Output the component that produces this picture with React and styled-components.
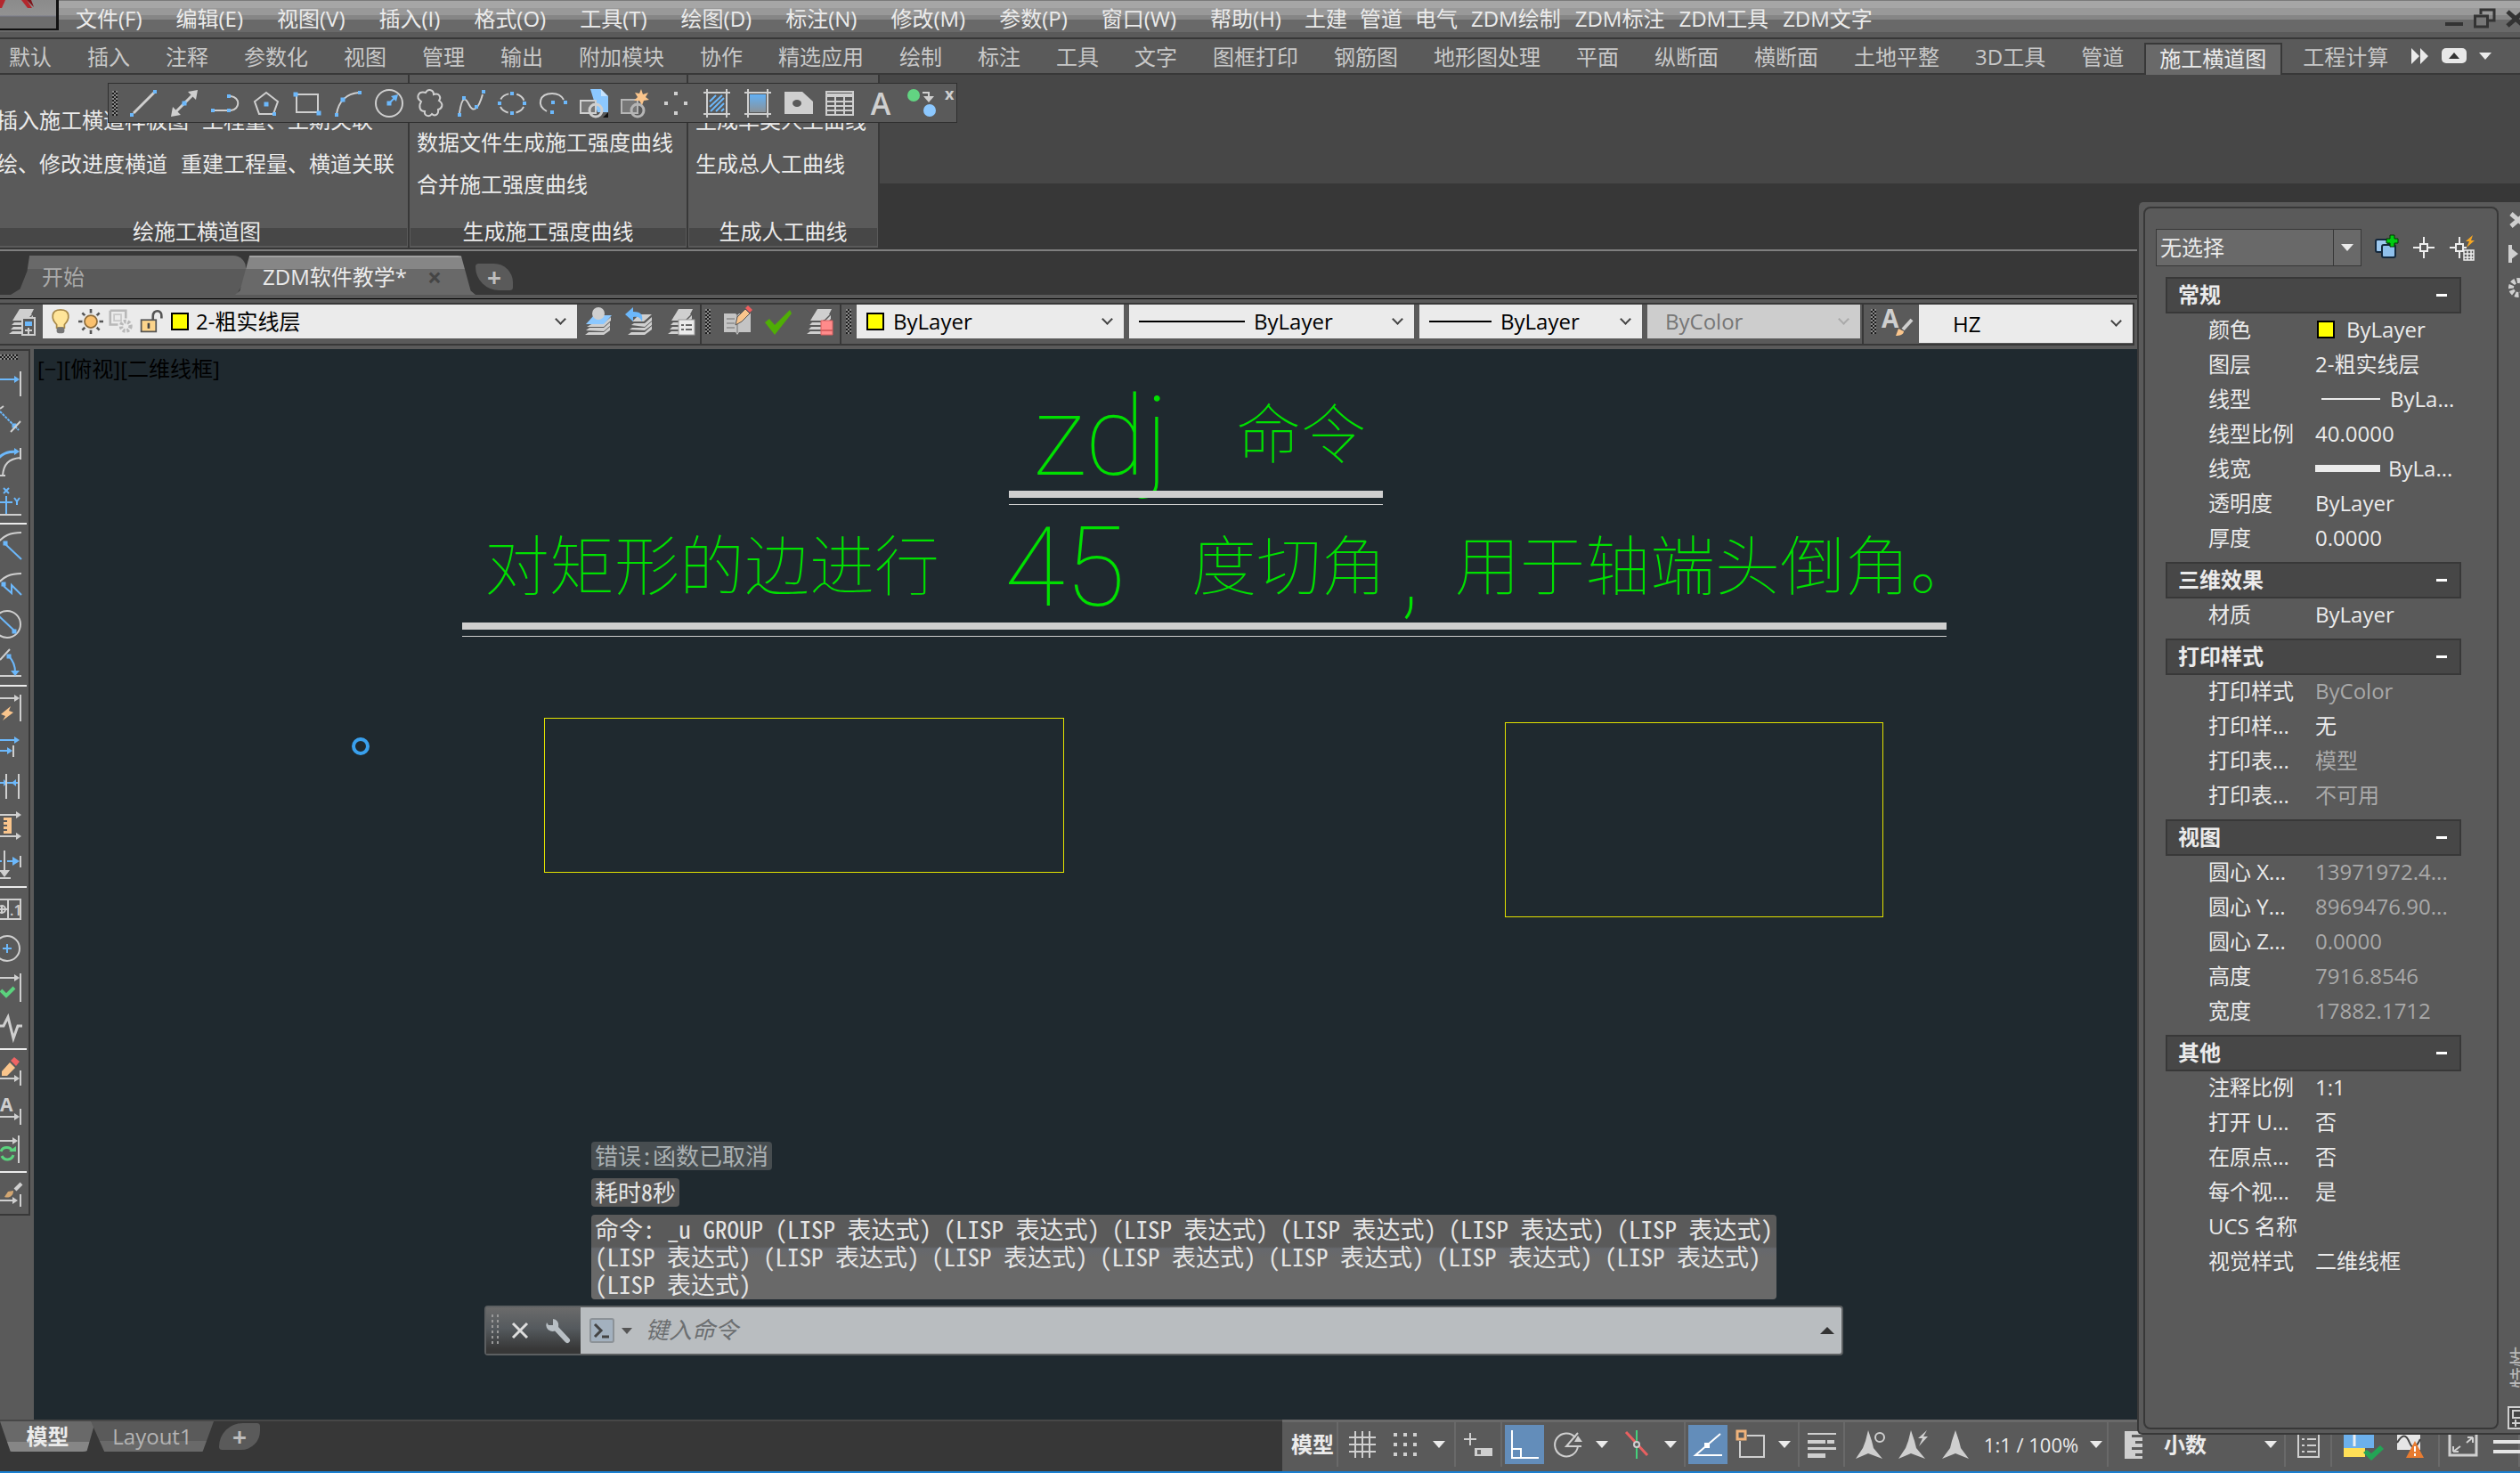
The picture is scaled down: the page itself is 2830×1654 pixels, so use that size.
import React from "react";
import styled, { createGlobalStyle, css } from "styled-components";

const C = {
  face: "#5a5a5a",
  edge: "#383838",
  dark: "#373737",
  mid: "#474747",
  raised: "#696969",
  text: "#ebebeb",
  dim: "#a9a9a9",
  tab: "#c8c8c8",
  canvas: "#1f292f",
  field: "#ebebeb",
  active: "#638dba",
};
const G = "#cfcfcf";
const B = "#6cb8fb";
const O = "#fac58c";

const GlobalStyle = createGlobalStyle`
  * { box-sizing: border-box; }
  html, body { margin: 0; background: ${C.face}; }
  body {
    font-family: "Open Sans", "Noto Sans CJK SC", sans-serif;
    font-size: 24px;
    line-height: 32px;
    color: ${C.text};
    overflow: hidden;
  }
  button, input, select { font: inherit; color: inherit; }
  button { border: 0; padding: 0; background: none; white-space: nowrap; }
`;

/* ---------- icons ---------- */

const Drawing = styled.svg`
  display: block;
  flex: none;
  width: ${(p) => p.$w || 32}px;
  height: ${(p) => p.$h || p.$w || 32}px;
  overflow: visible;
`;

const Sq = ({ x, y, s = 4, c = B }) => <rect x={x - s / 2} y={y - s / 2} width={s} height={s} fill={c} />;
const L = ({ d, c = G, w = 2, dash, f = "none" }) => (
  <path d={d} stroke={c} strokeWidth={w} fill={f} strokeDasharray={dash} />
);
const DimLine = ({ y, x = 24, c = G }) => (
  <>
    <L d={`M0 ${y}H${x + 6}`} c={c} />
    <path d={`M${x + 2} ${y - 4}l6 4-6 4z`} fill={c} />
  </>
);
const Stack = ({ c = G, top = G }) => (
  <>
    <path d="M8 14l6-6h14l-6 6z" fill={top} />
    <path d="M14 2h16l-3 6-7 7H6z" fill={top} />
    <path d="M5 20l3-3h13l8-8v4l-7 7zM4 25l3-3h14l8-7v4l-7 6zM2 30l4-3h15l8-7v4l-7 6z" fill={c} />
  </>
);

const ICONS = {
  line: (<><L d="M5 27L28 4" w={3} /><Sq x={3} y={29} /><Sq x={29} y={3} /></>),
  xline: (<><L d="M5 27L27 5" w={3} /><path d="M31 1l-2 11-9-9zM1 31l2-11 9 9z" fill={G} /><Sq x={16} y={16} s={5} /></>),
  pline: (<><L d="M4 24H18M22 8c11 1 11 15 0 16" dash="none" /><Sq x={2} y={24} /><Sq x={20} y={24} /><Sq x={20} y={8} /></>),
  polygon: (<><L d="M16 4L29 14 24 28H8L3 14Z" /><Sq x={16} y={17} s={5} /><Sq x={25} y={28} /></>),
  rect: (<><L d="M4 6H28V26H4Z" /><Sq x={3} y={6} s={5} /><Sq x={29} y={27} s={5} /></>),
  arc: (<><L d="M3 28C5 14 14 5 28 4" /><Sq x={3} y={29} /><Sq x={10} y={12} s={5} /><Sq x={29} y={4} /></>),
  circle: (<><circle cx="16" cy="16" r="15" fill="none" stroke={G} strokeWidth="2" /><Sq x={16} y={16} s={5} /><L d="M17 15L23 9" c={B} /><path d="M26 6l-2 8-6-6z" fill={B} /></>),
  cloud: (<L d="M6 14c-7-5-3-12 5-10 3-5 9-3 9 2 6-2 9 3 6 7 6 4 3 9-1 10 1 6-4 8-7 5-3 4-9 2-8-3-6 0-7-6-4-11z" />),
  spline: (<><L d="M3 27C6 6 10 10 14 18s10 6 15-12" /><Sq x={3} y={29} /><Sq x={8} y={10} /><Sq x={22} y={20} /><Sq x={30} y={3} /></>),
  ellipse: (<><ellipse cx="16" cy="16" rx="14" ry="11" fill="none" stroke={G} strokeWidth="2" strokeDasharray="11 9" strokeDashoffset="-4" /><Sq x={2} y={16} /><Sq x={30} y={16} /><Sq x={16} y={5} /><Sq x={16} y={27} /></>),
  earc: (<><L d="M9 25C-3 18 1 5 15 5c7 0 11 3 13 7" /><Sq x={16} y={15} /><Sq x={30} y={15} /><Sq x={15} y={26} /></>),
  insert: (<><path d="M12 0H24V8h8V26H20z" fill="#8cc8ff" /><path d="M24 0l8 8h-8z" fill="#c5e3ff" /><rect x="1" y="13" width="17" height="14" fill="#777" stroke={G} strokeWidth="2" /><circle cx="18" cy="24" r="7" fill="none" stroke={G} strokeWidth="3" /><path d="M32 26v6h-6z" fill="#111" /></>),
  block: (<><rect x="1" y="12" width="18" height="15" fill="#777" stroke="#b5b5b5" strokeWidth="2" /><circle cx="19" cy="24" r="7" fill="none" stroke="#b5b5b5" strokeWidth="3" /><path d="M23 0l2 6 6-2-3 5 4 3-6 1-2 5-3-5-6 0 4-4-3-5 5 1z" fill={O} /></>),
  points: (<><Sq x={16} y={5} c={G} /><Sq x={5} y={16} c={G} /><Sq x={27} y={16} c={G} /><Sq x={16} y={27} c={G} /></>),
  hatch: (<><L d="M1 4H31M1 28H31M5 0V32M27 0V32" w={2} /><path d="M8 14L15 7M8 20L22 7M9 25L24 10M15 25L24 16M21 25l3-3" stroke={B} strokeWidth="2" /></>),
  gradient: (<><defs><linearGradient id="sky" x1="0" y1="0" x2="0" y2="1"><stop offset="0" stopColor="#62b0f5" /><stop offset="1" stopColor="#8a9299" /></linearGradient></defs><rect x="7" y="6" width="18" height="20" fill="url(#sky)" /><L d="M1 4H31M1 28H31M5 0V32M27 0V32" w={2} /></>),
  region: (<><path d="M0 3H20L32 14V28H0Z" fill={G} /><ellipse cx="14" cy="16" rx="5" ry="4" fill={C.face} /></>),
  table: (<><rect x="1" y="3" width="30" height="26" fill="none" stroke={G} strokeWidth="2" /><L d="M1 7H31" w={4} /><L d="M1 14H31M1 19H31M1 24H31M11 8V29M21 8V29" /></>),
  nested: (<><circle cx="7" cy="7" r="7" fill="#62d482" /><circle cx="25" cy="24" r="7" fill="#8cc8ff" /><L d="M17 4h7v6" /><path d="M18 8h12l-6 7z" fill={G} /></>),

  layers: (<><Stack /><rect x="17" y="12" width="14" height="19" fill={C.face} stroke={G} strokeWidth="2" /><rect x="20" y="16" width="8" height="5" fill={B} /><L d="M24 23v7M20 26h8" /></>),
  bulb: (<><path d="M16 1C3 1 4 13 11 20v4h10v-4C28 13 29 1 16 1z" fill="#ffe59a" stroke="#a98a4a" strokeWidth="2" /><rect x="11" y="23" width="10" height="8" rx="3" fill="#777" /></>),
  sun: (<><L d="M16 0V32M0 16H32M5 5L27 27M27 5L5 27" c="#555" w={3} /><circle cx="16" cy="16" r="11" fill={C.field} /><circle cx="16" cy="16" r="8" fill="#fac16f" stroke="#8f6d3b" strokeWidth="2" /></>),
  freeze: (<><path d="M2 2H22V12M2 2V20H12" fill="none" stroke="#b8b8b8" strokeWidth="3" /><rect x="7" y="7" width="9" height="8" fill="none" stroke="#c8c8c8" strokeWidth="2" /><circle cx="22" cy="22" r="6" fill="none" stroke="#b8b8b8" strokeWidth="5" strokeDasharray="3 2" /></>),
  lock: (<><path d="M18 15V9c0-9 12-8 11 0v3" fill="none" stroke="#555" strokeWidth="3" /><rect x="3" y="14" width="19" height="15" fill="#fcd48b" stroke="#555" strokeWidth="2" /><rect x="11" y="18" width="3" height="7" fill="#444" /></>),
  laycur: (<><path d="M3 22L10 18h12l8-7v4l-8 7zM2 26l4-3h16l7-6v4l-7 6zM1 31l4-3h17l7-6v4l-7 5z" fill={G} /><path d="M2 19L11 9h20L22 19z" fill="#8cc8ff" /><circle cx="16" cy="7" r="7" fill={G} /></>),
  layprev: (<><path d="M16 8h14l-9 8H8zM7 20l3-2h12l8-7v4l-8 7zM5 25l3-2h14l8-7v4l-8 6zM3 31l4-3h15l8-7v4l-8 6z" fill={G} /><path d="M0 8l9-8v5c10 0 11 4 10 11-2-5-5-6-10-5v5z" fill={B} /></>),
  laystate: (<><Stack /><rect x="14" y="14" width="18" height="17" fill={C.field} stroke="#999" /><L d="M17 20h3M22 20h7M17 25h3M22 25h7" c="#666" /></>),
  edit: (<><path d="M1 7h13l2 2 2-2h13v21H18l-2 3-2-3H1z" fill="#c4c4c4" /><L d="M4 13h9M4 18h9M4 23h9M16 9v20" c="#8a8a8a" w={1.5} /><path d="M14 20l2-9 9-9 5 5-9 9z" fill="#fac58c" stroke="#555" /><path d="M25 1l3-3 5 5-3 3z" fill="#f05d5d" /></>),
  check: (<path d="M1 17l5-4 6 7L29 3l2 4L12 31z" fill="#4fae05" />),
  laydel: (<><Stack /><path d="M18 15h13v16H18z" fill="#ff8b8b" stroke="#d86060" /><L d="M18 26h13" c="#d86060" /></>),
  textstyle: (<><text x="-2" y="23" fontSize="28" fontWeight="700" fill={G}>A</text><L d="M32 14L22 25" w={4} c={G} /><path d="M14 32l3-8 6 3c0 4-5 5-9 5z" fill={O} /></>),

  dimlin: (<><DimLine y={11} x={22} c={B} /><L d="M31 2V30" /></>),
  dimali: (<><L d="M8 3L29 24" c={B} dash="3 1" /><Sq x={24} y={19} s={5} /><L d="M31 14L20 26M8 0l4-3" /></>),
  dimarc: (<><L d="M2 16C10 6 16 4 27 4" c={B} w={3} /><path d="M24 0l6 4-6 4z" fill={B} /><L d="M31 0V13M31 11C18 12 12 18 11 31M8 31h6" /></>),
  dimord: (<><L d="M15 10V31M6 17H22" c={B} /><L d="M12 1l6 6M18 1l-6 6M24 12l3 4 3-4M27 16v4" c={B} /><L d="M4 31H32" /></>),
  dimrad: (<><L d="M4 14C12 4 20 1 32 1" /><L d="M14 14L32 31" c={B} /><Sq x={14} y={13} s={5} /></>),
  dimjog: (<><L d="M4 16C12 6 20 3 32 3" /><L d="M12 17L21 25V16L32 27" c={B} /><Sq x={12} y={15} s={5} /></>),
  dimdia: (<><circle cx="16" cy="16" r="15" fill="none" stroke={G} strokeWidth="2" /><L d="M6 6L25 24" c={B} /><Sq x={24} y={24} s={5} /></>),
  dimang: (<><L d="M8 12L19 0M4 30H32" /><L d="M18 8c5 5 7 12 7 18" c={B} /><Sq x={18} y={8} s={5} /><path d="M20 24h10l-5 6z" fill={B} /></>),
  quick: (<><DimLine y={5} x={22} /><L d="M31 1V31" /><path d="M20 14l-11 9 5 2-3 5 12-9-5-2z" fill={O} /></>),
  base: (<><DimLine y={8} x={22} c={B} /><DimLine y={20} x={14} c={B} /><L d="M23 14V27" /></>),
  cont: (<><L d="M8 12H30" c={B} /><path d="M12 8l4 4-4 4zM26 8l-5 4 5 4z" fill={B} /><L d="M15 2V30M29 2V30" /></>),
  space: (<><DimLine y={4} /><DimLine y={28} /><path d="M12 7H21V25H12v-3h4v-2h-4v-3h4v-2h-4v-3h4v-2h-4z" fill={O} /></>),
  brk: (<><L d="M13 0V25M7 31H20" /><path d="M7 22h12l-6 8z" fill={G} /><L d="M8 12h2M16 12h8" c={B} /><path d="M22 7l8 5-8 5z" fill={B} /><L d="M31 6V19" /></>),
  tol: (<><rect x="2" y="5" width="29" height="22" fill="none" stroke={G} strokeWidth="2" /><L d="M17 5V27M8 16h8M10 12v9" /><circle cx="10" cy="16" r="4" fill="none" stroke={G} strokeWidth="2" /><text x="19" y="23" fontSize="16" fontWeight="600" fill={G}>.1</text></>),
  center: (<><circle cx="16" cy="16" r="14" fill="none" stroke={G} strokeWidth="2" /><L d="M16 11V21M11 16H21" c={B} /></>),
  inspect: (<><DimLine y={5} x={22} /><L d="M31 0V32" /><L d="M9 19l6 6 9-9" c="#5bd27d" w={4} /></>),
  jog: (<L d="M4 15h8l5-10 6 24 5-14h5" w={3} />),
  dimedit: (<><DimLine y={24} x={22} /><L d="M31 15V32" /><path d="M10 16l9-10 6 6-9 9-6 0z" fill={O} /><path d="M20 4l4-4 6 5-4 5z" fill="#f06464" /></>),
  dimtext: (<><DimLine y={23} x={22} /><L d="M31 14V32" /><text x="8" y="17" fontSize="21" fontWeight="700" fill={G}>A</text></>),
  update: (<><DimLine y={6} x={20} /><L d="M29 0V31" /><L d="M9 18a7 7 0 0 1 13 0M23 22a7 7 0 0 1-13 1" c="#5bd27d" w={3} /><path d="M18 18h8v-6z" fill="#5bd27d" /></>),
  brush: (<><DimLine y={23} x={20} /><L d="M31 16V30" /><path d="M13 19l4-6 6-1c0 6-5 9-10 7z" fill="#d2a671" /><L d="M32 4L25 11" w={4} /></>),

  grid: (<L d="M1 8H31M1 16H31M1 24H31M8 1V31M16 1V31M24 1V31" />),
  dots: (<g fill={G}>{[3, 14, 25].map((x) => [3, 14, 25].map((y) => <rect key={x + "-" + y} x={x} y={y} width="4" height="4" />))}</g>),
  snap: (<><L d="M0 10H14M7 3V17" /><rect x="12" y="20" width="20" height="9" fill={G} /><rect x="15" y="22" width="4" height="5" fill="#666" /></>),
  ortho: (<L d="M2 0V31H32M2 21H12V31" c="#fff" w={2} />),
  polar: (<><L d="M25 8A13 13 0 1 0 28 18" /><L d="M32 18H15L28 3" /><path d="M24 13h9l-5-7z" fill={G} /></>),
  iso: (<><L d="M16 0V32" c="#45d07b" /><L d="M4 2L28 28" c="#e86060" w={3} /><circle cx="16" cy="16" r="3" fill={C.face} stroke={G} strokeWidth="2" /></>),
  osnap: (<><L d="M30 4L2 28H32" c="#fff" w={2} /><rect x="12" y="14" width="6" height="6" fill="#fff" /></>),
  osnap3: (<><L d="M12 6H31V30H4V12" /><rect x="1" y="1" width="9" height="9" fill={C.face} stroke="#f0b37b" strokeWidth="3" /></>),
  weight: (<g fill={G}><rect y="3" width="32" height="2" /><rect y="11" width="20" height="4" /><rect x="22" y="11" width="8" height="4" /><rect y="19" width="32" height="3" /><rect y="26" width="20" height="5" /></g>),
  anno1: (<><path d="M14 0l4 12 2 8 10 12-16-6-14 6 8-12 3-8z" fill={G} /><circle cx="27" cy="8" r="5" fill="none" stroke={G} strokeWidth="2" /></>),
  anno2: (<><path d="M14 0l4 12 2 8 10 12-16-6-14 6 8-12 3-8z" fill={G} /><path d="M32 0l-10 9h5l-4 9 10-11h-5z" fill={G} /></>),
  anno3: (<path d="M16 0l4 12 2 8 9 12-15-6-15 6 9-12 2-8z" fill={G} />),
  ruler: (<path d="M6 1H26v4h-12v3h12v4h-8v3h8v4h-12v3h12v4h-8v3h8v3H6z" fill={G} />),
  list: (<><rect x="5" y="2" width="23" height="28" fill="none" stroke={G} strokeWidth="2" /><L d="M9 10h3M15 10h10M9 17h3M15 17h10M9 24h3M15 24h10" /></>),
  view: (<><rect x="-4" y="-4" width="34" height="24" fill="#6cb0ec" /><path d="M-4 20h24v10H-4z" fill="#ffdf57" /><L d="M8 0v18M3 2h10" w={3} c="#eee" /><path d="M18 25l9 9 14-13-4-4-10 9-5-4z" fill="#23a455" /></>),
  warn: (<><rect x="2" y="0" width="26" height="22" fill="#e6e6e6" /><L d="M2 14c6-10 10-10 14 0s8 4 12-4" c="#444" /><path d="M22 12l10 19H12z" fill="#e87b30" /><L d="M22 18v6M22 26v3" c="#fff" /></>),
  full: (<><rect x="1" y="-4" width="30" height="32" fill="none" stroke={G} strokeWidth="3" /><L d="M5 24l8-6M5 24v-6M5 24h6M27 8l-7 6M27 8v6M27 8h-6" /></>),
  menu: (<L d="M0 13H40M0 24H40" w={4} c="#e6e6e6" />),
};

const Icon = ({ name, size = 32 }) => (
  <Drawing viewBox="0 0 32 32" $w={size} aria-hidden="true">{ICONS[name]}</Drawing>
);
const Chevron = styled.span`
  flex: none;
  width: 9px;
  height: 9px;
  margin: 0 14px 6px 0;
  border: solid ${(p) => (p.$off ? "#aaa" : "#444")};
  border-width: 0 2px 2px 0;
  transform: rotate(45deg);
`;
const Caret = styled.span`
  display: inline-block;
  border: 7px solid transparent;
  border-top: 8px solid ${C.text};
  border-bottom: 0;
`;
const Grip = styled.span`
  flex: none;
  width: ${(p) => (p.$flat ? "20px" : "6px")};
  height: ${(p) => (p.$flat ? "6px" : "28px")};
  background: repeating-conic-gradient(#1d1d1d 0 25%, #8a8a8a 0 50%) 0 0 / 4px 4px;
`;

/* ---------- shell ---------- */

const Shell = styled.div`
  position: relative;
  display: flex;
  flex-direction: column;
  height: 100vh;
  overflow: hidden;
`;

const MenuBar = styled.header`
  display: flex;
  flex: none;
  height: 44px;
  border-bottom: 2px solid ${C.edge};
  background: linear-gradient(#7a7a7a 0 1px, #a6a6a6 1px 9px, #999 9px 17px, #868686 17px 22px, #696969 22px 36px, ${C.face} 36px);
`;
const AppButton = styled.button`
  flex: none;
  width: 66px;
  height: 34px;
  border: solid #111;
  border-width: 0 3px 2px 0;
  background: linear-gradient(#8b8b8b, #929292 17px, #7b7d8c 18px, #6d6d6d 19px);
  overflow: hidden;
`;
const Menus = styled.nav`
  display: flex;
  flex: 1;
  align-items: center;
`;
const MenuItem = styled.button`
  padding: 0 ${(p) => p.$pad || 19}px;
`;
const WindowButtons = styled.div`
  display: flex;
  align-items: center;
  margin-right: -6px;
  gap: 12px;
`;

const RibbonTabs = styled.nav`
  display: flex;
  flex: none;
  height: 40px;
  border-bottom: 2px solid ${C.edge};
`;
const RibbonTab = styled.button`
  padding: 2px 20px 0;
  color: ${C.tab};
  &:first-child { padding-left: 10px; }
  ${(p) => p.$on && css`
    margin: 4px 3px -2px;
    padding: 0 16px 6px 15px;
    color: ${C.text};
    border: 2px solid ${C.edge};
    border-bottom: 0;
    background: ${C.raised};
  `}
`;
const RibbonExtras = styled.div`
  display: flex;
  align-items: center;
  gap: 14px;
  margin-left: 6px;
`;

const Ribbon = styled.section`
  position: relative;
  display: flex;
  flex: none;
  height: 198px;
  padding-bottom: 2px;
  border-bottom: 2px solid #7f7f7f;
  background: linear-gradient(${C.mid} 122px, ${C.dark} 122px);
`;
const RibbonPanel = styled.section`
  display: flex;
  flex-direction: column;
  width: ${(p) => p.$w}px;
  border-right: 2px solid ${C.edge};
  background: ${C.face};
  overflow: hidden;
  &:first-child { margin-left: -16px; }
`;
const RibbonRows = styled.div`
  display: flex;
  flex-direction: column;
  flex: 1;
  gap: ${(p) => (p.$tight ? 15 : 17)}px;
  padding-top: ${(p) => (p.$tight ? 60 : 35)}px;
  margin-left: ${(p) => p.$x}px;
`;
const RibbonRow = styled.div`
  display: flex;
  gap: 15px;
`;
const RibbonTitle = styled.h2`
  margin: 0 1px 2px;
  font-size: 24px;
  font-weight: 400;
  line-height: 32px;
  text-align: center;
  background: linear-gradient(transparent 12px, ${C.mid} 12px);
`;

const FloatBar = styled.div`
  position: absolute;
  left: 121px;
  top: 9px;
  display: flex;
  height: 45px;
  padding-left: 4px;
  align-items: center;
  border: 1px solid #2f2f2f;
  background: ${C.face};
`;
const FloatTools = styled.div`
  display: flex;
  gap: 14px;
  margin: 0 9px 0 13px;
`;
const LetterIcon = styled.button`
  width: 32px;
  height: 32px;
  font-weight: 600;
  font-size: 34px;
  line-height: 32px;
  color: ${G};
`;
const CloseMark = styled.button`
  align-self: flex-start;
  margin: 0 3px 0 1px;
  font-size: 18px;
  line-height: 22px;
  font-weight: 700;
  color: ${G};
`;

const FileTabs = styled.nav`
  display: flex;
  flex: none;
  align-items: flex-end;
  height: 49px;
  padding-left: 12px;
  background: ${C.dark};
`;
const FileTab = styled.button`
  display: flex;
  align-items: center;
  justify-content: space-between;
  width: ${(p) => (p.$on ? 270 : 264)}px;
  height: 44px;
  padding: 4px 38px 0 ${(p) => (p.$on ? 31 : 35)}px;
  margin-left: ${(p) => (p.$on ? -12 : 0)}px;
  border-radius: ${(p) => (p.$on ? "16px 20px 0 0" : "16px 14px 0 0")};
  clip-path: ${(p) => (p.$on
    ? "polygon(0 100%, 2% 90%, 6% 0, 94% 0, 98% 90%, 100% 100%)"
    : "polygon(0 100%, 4% 85%, 7% 40%, 8% 0, 100% 0, 100% 60%, 96% 100%)")};
  color: ${(p) => (p.$on ? C.text : C.dim)};
  background: ${(p) => (p.$on
    ? "linear-gradient(#a0a0a0 2px, #868686 2px 15px, #696969 15px)"
    : "linear-gradient(#696969 15px, #5a5a5a 15px)")};
`;
const FileClose = styled.span`
  color: #454545;
  font-size: 28px;
  font-weight: 700;
`;
const AddTab = styled.button`
  width: ${(p) => (p.$low ? 46 : 42)}px;
  height: 30px;
  margin-bottom: 5px;
  margin-top: ${(p) => (p.$low ? 2 : 0)}px;
  margin-left: ${(p) => (p.$low ? 11 : 0)}px;
  border-radius: ${(p) => (p.$low ? "30px 4px 24px 4px" : "4px 24px 4px 30px")};
  font-weight: 700;
  font-size: 28px;
  line-height: 28px;
  color: #bdbdbd;
  background: ${C.face};
`;

const ToolRow = styled.div`
  display: flex;
  flex: none;
  height: 61px;
  padding: 9px 0 4px;
  background: linear-gradient(${C.face} 4px, #000 4px 5px, ${C.face} 5px);
`;
const ToolGroup = styled.div`
  display: flex;
  align-items: flex-start;
  gap: ${(p) => p.$gap}px;
  width: ${(p) => (p.$w ? p.$w + "px" : "auto")};
  padding: 0 0 0 ${(p) => p.$pl}px;
  border: solid ${C.edge};
  border-width: 2px 2px 2px 0;
  & > ${Grip} { margin-top: 5px; }
`;
const ToolSet = styled.div`
  display: flex;
  gap: 14px;
  padding-top: 3px;
`;
const Combo = styled.label`
  display: flex;
  align-items: center;
  width: ${(p) => p.$w}px;
  height: ${(p) => p.$h || 38}px;
  padding-left: ${(p) => p.$pl || 11}px;
  color: ${(p) => (p.$off ? "#767676" : "#000")};
  background: ${(p) => (p.$off ? "#cdcdcd" : C.field)};
`;
const Pick = styled.select`
  flex: 1;
  min-width: 0;
  height: 32px;
  padding: 0;
  margin-left: ${(p) => p.$ml || 0}px;
  border: 0;
  appearance: none;
  background: transparent;
  color: inherit;
  opacity: 1;
`;
const Swatch = styled.span`
  flex: none;
  width: 20px;
  height: 20px;
  border: 2px solid #000;
  background: #ff0;
`;
const Rule = styled.span`
  flex: none;
  width: ${(p) => p.$w}px;
  height: ${(p) => p.$h || 2}px;
  background: ${(p) => p.$c || "#000"};
`;
const LayerFlags = styled.span`
  display: flex;
  gap: 6px;
  margin-right: 8px;
`;

/* ---------- work area ---------- */

const Work = styled.main`
  display: flex;
  flex: 1;
  min-height: 0;
`;
const Dock = styled.aside`
  flex: none;
  width: 38px;
  padding-right: 4px;
`;
const DockBar = styled.div`
  display: flex;
  flex-direction: column;
  width: 34px;
  padding-top: 4px;
  border: solid ${C.edge};
  border-width: 2px 2px 2px 0;
  overflow: hidden;
`;
const DockTool = styled.button`
  display: flex;
  align-items: center;
  height: 44px;
  margin-left: -8px;
`;
const DockLine = styled.hr`
  width: 30px;
  height: 2px;
  margin: 2px 0;
  border: 0;
  background: ${C.text};
`;
const DockGrip = styled.div`
  display: flex;
  height: 11px;
`;

const Canvas = styled.section`
  position: relative;
  flex: 1;
  overflow: hidden;
  background: ${C.canvas};
`;
const ViewLabel = styled.div`
  position: absolute;
  left: 4px;
  top: 6px;
  color: #000;
`;
const Model = styled.svg`
  position: absolute;
  left: 0;
  top: 0;
  width: 2362px;
  height: 1202px;
`;
const CadText = styled.text`
  font-family: ${(p) => (p.$latin ? "Roboto" : '"Noto Sans CJK SC"')}, sans-serif;
  font-weight: 100;
  font-size: ${(p) => (p.$latin ? 124 : 73)}px;
  fill: #00e000;
`;

const Console = styled.div`
  position: absolute;
  left: 506px;
  bottom: 72px;
  width: 1526px;
`;
const Log = styled.div`
  display: flex;
  flex-direction: column;
  align-items: flex-start;
  gap: 9px;
  margin: 0 0 7px 120px;
`;
const LogBox = styled.pre`
  margin: 0;
  padding: 0 4px 2px;
  border-radius: 4px;
  font-family: "Noto Sans Mono CJK SC", "Noto Sans CJK SC", monospace;
  font-size: ${(p) => (p.$brief ? 26 : 27)}px;
  line-height: ${(p) => (p.$brief ? 30 : 31)}px;
  color: ${(p) => (p.$faint ? "#aab0b2" : "#e4e4e4")};
  background: ${(p) => p.$bg};
`;
const CommandBar = styled.div`
  display: flex;
  height: 56px;
  border: 2px solid #5c5f61;
  border-radius: 4px;
  background: #b9bdc0;
`;
const CommandTools = styled.div`
  display: flex;
  align-items: center;
  gap: 14px;
  width: 106px;
  padding-left: 6px;
  background: linear-gradient(#6b6b6b, #555a5e 45%, ${C.dark} 90%);
`;
const PromptButton = styled.button`
  display: flex;
  align-items: center;
  gap: 8px;
  padding: 0 15px 0 10px;
  color: #555;
`;
const CommandInput = styled.input`
  flex: 1;
  border: 0;
  padding: 0 0 2px;
  outline: 0;
  font-size: 26px;
  font-style: italic;
  background: transparent;
  &::placeholder { color: #6c6f71; opacity: 1; }
`;
const Recent = styled.button`
  width: 24px;
`;

/* ---------- properties palette ---------- */

const Palette = styled.aside`
  position: absolute;
  right: 0;
  top: 227px;
  bottom: 43px;
  display: flex;
  width: 430px;
  padding: 5px 0 4px 5px;
  border: solid ${C.edge};
  border-width: 0 0 2px 2px;
  border-radius: 6px 0 0 6px;
  background: ${C.face};
`;
const PaletteBody = styled.div`
  flex: 1;
  padding-top: 23px;
  border: 2px solid ${C.edge};
  border-radius: 8px;
`;
const PaletteTop = styled.div`
  display: flex;
  align-items: center;
  height: 42px;
  margin: 0 0 12px 12px;
`;
const Selector = styled.label`
  display: flex;
  align-items: center;
  width: 231px;
  height: 42px;
  margin-right: 12px;
  padding-left: 4px;
  border: 1px solid ${C.edge};
  background: ${C.raised};
`;
const SelectorArrow = styled.span`
  display: flex;
  align-items: center;
  justify-content: center;
  width: 31px;
  height: 40px;
  border-left: 1px solid ${C.edge};
`;
const PaletteTools = styled.div`
  display: flex;
  gap: 10px;
`;
const Section = styled.section`
  margin: 0 40px 6px 23px;
`;
const SectionHead = styled.button`
  display: flex;
  align-items: center;
  justify-content: space-between;
  width: 100%;
  height: 41px;
  padding: 0 14px 1px 12px;
  border: 2px solid ${C.edge};
  font-weight: 700;
  background: ${C.mid};
`;
const Props = styled.table`
  width: 100%;
  border-collapse: collapse;
  table-layout: fixed;
`;
const PropRow = styled.tr`
  height: 39px;
`;
const PropName = styled.th`
  width: 168px;
  padding: 0 0 4px 48px;
  font-weight: 400;
  text-align: left;
  white-space: nowrap;
`;
const PropValue = styled.td`
  padding: 0 0 4px;
  white-space: nowrap;
  color: ${(p) => (p.$off ? C.dim : C.text)};
`;
const ValueLine = styled.span`
  display: flex;
  align-items: center;
  gap: ${(p) => p.$gap}px;
  padding-left: ${(p) => p.$pl || 0}px;
`;
const PaletteSide = styled.div`
  display: flex;
  flex-direction: column;
  align-items: flex-start;
  width: 24px;
  padding-left: 10px;
  overflow: hidden;
`;
const SideTools = styled.div`
  display: flex;
  flex-direction: column;
  gap: 14px;
  padding-top: 3px;
  flex: 1;
`;
const SideTitle = styled.span`
  writing-mode: vertical-rl;
  text-orientation: sideways;
  transform: rotate(180deg);
  line-height: 28px;
  margin-bottom: 20px;
  color: #b8b8b8;
`;

/* ---------- footer ---------- */

const Footer = styled.footer`
  display: flex;
  flex: none;
  height: 60px;
  border-bottom: 2px solid #1a7fd0;
  background: ${C.dark};
`;
const ModelTabs = styled.nav`
  display: flex;
  flex: 1;
  align-items: flex-start;
  border-top: 2px solid ${C.mid};
`;
const ModelTab = styled.button`
  width: ${(p) => p.$w}px;
  height: 34px;
  margin-right: -5px;
  border-radius: 0 0 14px 14px;
  clip-path: polygon(0 0, 100% 0, 91% 100%, 11% 100%);
  font-weight: ${(p) => (p.$on ? 700 : 400)};
  color: ${(p) => (p.$on ? C.text : "#b4b4b4")};
  background: ${(p) => (p.$on
    ? "linear-gradient(#696969 23px, #868686 23px)"
    : "linear-gradient(#5a5a5a 22px, #696969 22px)")};
`;
const Status = styled.div`
  display: flex;
  flex: none;
  width: 1390px;
  padding: 0 0 5px 3px;
  border-top: 3px solid ${C.raised};
  background: ${C.face};
`;
const StatusGroup = styled.div`
  display: flex;
  flex: none;
  width: ${(p) => p.$w}px;
  padding-left: ${(p) => p.$pl || 0}px;
  border-right: 2px solid ${C.raised};
`;
const StatusButton = styled.button`
  display: flex;
  flex: none;
  align-items: center;
  justify-content: center;
  width: ${(p) => p.$w}px;
  ${(p) => p.$on && css`
    background: linear-gradient(90deg, transparent 3px, ${C.active} 3px calc(100% - 3px), transparent 0);
    margin: 3px 0;
  `}
  ${(p) => p.$bold && css`font-weight: 600;`}
  ${(p) => p.$small && css`font-size: 22px;`}
`;

/* ---------- data ---------- */

const MENUS = ["文件(F)", "编辑(E)", "视图(V)", "插入(I)", "格式(O)", "工具(T)", "绘图(D)", "标注(N)", "修改(M)", "参数(P)", "窗口(W)", "帮助(H)"];
const EXTRA_MENUS = ["土建", "管道", "电气"];
const ZDM_MENUS = ["ZDM绘制", "ZDM标注", "ZDM工具", "ZDM文字"];
const RIBBON = ["默认", "插入", "注释", "参数化", "视图", "管理", "输出", "附加模块", "协作", "精选应用", "绘制", "标注", "工具", "文字", "图框打印", "钢筋图", "地形图处理", "平面", "纵断面", "横断面", "土地平整", "3D工具", "管道", "施工横道图", "工程计算"];
const PANELS = [
  { title: "绘施工横道图", w: 476, x: 12, rows: [["插入施工横道样板图", "工程量、工期关联"], ["绘、修改进度横道", "重建工程量、横道关联"]] },
  { title: "生成施工强度曲线", w: 313, x: 8, tight: true, rows: [["数据文件生成施工强度曲线"], ["合并施工强度曲线"]] },
  { title: "生成人工曲线", w: 215, x: 8, rows: [["生成单类人工曲线"], ["生成总人工曲线"]] },
];
const DRAW = ["line", "xline", "pline", "polygon", "rect", "arc", "circle", "cloud", "spline", "ellipse", "earc", "insert", "block", "points", "hatch", "gradient", "region", "table"];
const DIMS = ["dimlin", "dimali", "dimarc", "dimord", "-", "dimrad", "dimjog", "dimdia", "dimang", "-", "quick", "base", "cont", "space", "brk", "-", "tol", "center", "inspect", "jog", "-", "dimedit", "dimtext", "update", "-", "brush"];
const SECTIONS = [
  { title: "常规", rows: [["颜色", "ByLayer", { mark: "swatch" }], ["图层", "2-粗实线层"], ["线型", "ByLa...", { mark: "thin" }], ["线型比例", "40.0000"], ["线宽", "ByLa...", { mark: "thick" }], ["透明度", "ByLayer"], ["厚度", "0.0000"]] },
  { title: "三维效果", rows: [["材质", "ByLayer"]] },
  { title: "打印样式", rows: [["打印样式", "ByColor", { off: true }], ["打印样...", "无"], ["打印表...", "模型", { off: true }], ["打印表...", "不可用", { off: true }]] },
  { title: "视图", rows: [["圆心 X...", "13971972.4...", { off: true }], ["圆心 Y...", "8969476.90...", { off: true }], ["圆心 Z...", "0.0000", { off: true }], ["高度", "7916.8546", { off: true }], ["宽度", "17882.1712", { off: true }]] },
  { title: "其他", rows: [["注释比例", "1:1"], ["打开 U...", "否"], ["在原点...", "否"], ["每个视...", "是"], ["UCS 名称", ""], ["视觉样式", "二维线框"]] },
];
const STATUS = [
  { w: 60, pl: 4, items: [[54, "@模型"]] },
  { w: 132, items: [[54, "grid"], [42, "dots"], [34, "v"]] },
  { w: 52, items: [[50, "snap"]] },
  { w: 206, items: [[50, "ortho", true], [46, "polar"], [32, "v"], [46, "iso"], [30, "v"]] },
  { w: 128, items: [[50, "osnap", true], [46, "osnap3"], [30, "v"]] },
  { w: 51, items: [[49, "weight"]] },
  { w: 296, pl: 4, items: [[48, "anno1"], [48, "anno2"], [48, "anno3"], [122, "#1:1 / 100%"], [24, "v"]] },
  { w: 199, items: [[56, "ruler"], [60, "@小数"], [50, ""], [31, "v"]] },
  { w: 52, items: [[50, "list"]] },
  { w: 121, items: [[66, "view"], [42, "warn"]] },
  { w: 90, items: [[52, "full"], [48, "menu"]] },
];

const LISP = "(LISP 表达式)";
const LOG_LINES = [
  "命令: _u GROUP " + Array(6).fill(LISP).join(" "),
  Array(7).fill(LISP).join(" "),
  LISP,
].join("\n");

/* ---------- parts ---------- */

const Option = ({ label, value, w, h, pl, ml, off, children }) => (
  <Combo $w={w} $h={h} $pl={pl} $off={off}>
    {children}
    <Pick aria-label={label} $ml={ml} disabled={off} defaultValue={value}>
      <option>{value}</option>
    </Pick>
    <Chevron $off={off} />
  </Combo>
);

const Tools = ({ names }) => names.map((n) => <button key={n} aria-label={n}><Icon name={n} /></button>);

const Value = ({ text, mark }) => {
  if (mark === "swatch") return <ValueLine $pl={2} $gap={13}><Swatch />{text}</ValueLine>;
  if (mark === "thin") return <ValueLine $pl={7} $gap={11}><Rule $w={66} $c={C.text} />{text}</ValueLine>;
  if (mark === "thick") return <ValueLine $gap={9}><Rule $w={73} $h={8} $c={C.text} />{text}</ValueLine>;
  return text;
};

const StatusItem = ({ item: [w, kind, on] }) => {
  if (kind === "v") return <StatusButton $w={w} aria-label="展开"><Caret /></StatusButton>;
  if (kind[0] === "@") return <StatusButton $w={w} $bold>{kind.slice(1)}</StatusButton>;
  if (kind[0] === "#") return <StatusButton $w={w} $small>{kind.slice(1)}</StatusButton>;
  return <StatusButton $w={w} $on={on} aria-label={kind}>{kind && <Icon name={kind} />}</StatusButton>;
};

export default function App() {
  return (
    <Shell>
      <GlobalStyle />
      <MenuBar>
        <AppButton aria-label="应用程序菜单">
          <Drawing viewBox="0 0 62 32" $w={62} $h={32}>
            <path d="M0 0H6L2 9H0z" fill="#b3272d" />
            <path d="M24 0h6l6 9h-5z" fill="#b3272d" />
            <path d="M30 0h5l3 8z" fill="#7e1218" />
          </Drawing>
        </AppButton>
        <Menus>
          {MENUS.map((m) => <MenuItem key={m}>{m}</MenuItem>)}
          {EXTRA_MENUS.map((m) => <MenuItem key={m} $pad={7}>{m}</MenuItem>)}
          {ZDM_MENUS.map((m) => <MenuItem key={m} $pad={8}>{m}</MenuItem>)}
        </Menus>
        <WindowButtons>
          <button aria-label="最小化"><Drawing viewBox="0 0 20 26" $w={20} $h={26}><rect y="17" width="20" height="4" fill="#333" /></Drawing></button>
          <button aria-label="还原"><Drawing viewBox="0 0 24 24" $w={24} $h={24}><path d="M8 7V2H23V14H17" fill="none" stroke="#333" strokeWidth="3" /><rect x="1.500" y="9" width="14" height="12" fill="#777" stroke="#333" strokeWidth="3" /></Drawing></button>
          <button aria-label="关闭"><Drawing viewBox="0 0 22 22" $w={22} $h={22}><path d="M2 3L20 19M20 3L2 19" stroke="#333" strokeWidth="5" /></Drawing></button>
        </WindowButtons>
      </MenuBar>

      <RibbonTabs>
        {RIBBON.map((t, i) => <RibbonTab key={t + i} $on={t === "施工横道图"}>{t}</RibbonTab>)}
        <RibbonExtras>
          <button aria-label="更多选项卡"><Drawing viewBox="0 0 20 18" $w={20} $h={18}><path d="M0 0l9 9-9 9zM10 0l9 9-9 9z" fill={C.text} /></Drawing></button>
          <button aria-label="最小化功能区"><Drawing viewBox="0 0 28 18" $w={28} $h={18}><rect width="28" height="17" rx="5" fill="#e8e8e8" /><path d="M14 5l6 7H8z" fill="#333" /></Drawing></button>
          <Caret />
        </RibbonExtras>
      </RibbonTabs>

      <Ribbon>
        {PANELS.map((p) => (
          <RibbonPanel key={p.title} $w={p.w}>
            <RibbonRows $x={p.x} $tight={p.tight}>
              {p.rows.map((row) => (
                <RibbonRow key={row[0]}>{row.map((c) => <button key={c}>{c}</button>)}</RibbonRow>
              ))}
            </RibbonRows>
            <RibbonTitle>{p.title}</RibbonTitle>
          </RibbonPanel>
        ))}
        <FloatBar>
          <Grip />
          <FloatTools>
            <Tools names={DRAW} />
            <LetterIcon>A</LetterIcon>
            <Tools names={["nested"]} />
          </FloatTools>
          <CloseMark>x</CloseMark>
        </FloatBar>
      </Ribbon>

      <FileTabs>
        <FileTab>开始</FileTab>
        <FileTab $on>ZDM软件教学*<FileClose>×</FileClose></FileTab>
        <AddTab>+</AddTab>
      </FileTabs>

      <ToolRow>
        <ToolGroup $w={788} $gap={8} $pl={8}>
          <ToolSet><Tools names={["layers"]} /></ToolSet>
          <Option label="图层" value="2-粗实线层" w={600} pl={6} ml={8}>
            <LayerFlags>
              {["bulb", "sun", "freeze", "lock"].map((n) => <Icon key={n} name={n} size={28} />)}
            </LayerFlags>
            <Swatch />
          </Option>
          <ToolSet><Tools names={["laycur", "layprev", "laystate"]} /></ToolSet>
        </ToolGroup>
        <ToolGroup $w={157} $gap={14} $pl={4}>
          <Grip />
          <ToolSet><Tools names={["edit", "check", "laydel"]} /></ToolSet>
        </ToolGroup>
        <ToolGroup $w={1148} $gap={6} $pl={5}>
          <Grip />
          <Option label="颜色" value="ByLayer" w={300} ml={10}><Swatch /></Option>
          <Option label="线型" value="ByLayer" w={320} ml={10}><Rule $w={119} /></Option>
          <Option label="线宽" value="ByLayer" w={250} ml={10}><Rule $w={70} /></Option>
          <Option label="打印样式" value="ByColor" w={239} pl={20} off />
        </ToolGroup>
        <ToolGroup $gap={8} $pl={8}>
          <Grip />
          <ToolSet><Tools names={["textstyle"]} /></ToolSet>
          <Option label="文字样式" value="HZ" w={240} h={43} pl={38} />
        </ToolGroup>
      </ToolRow>

      <Work>
        <Dock>
          <DockBar>
            <DockGrip><Grip $flat /></DockGrip>
            {DIMS.map((n, i) => (n === "-" ? <DockLine key={i} /> : <DockTool key={n} aria-label={n}><Icon name={n} /></DockTool>))}
          </DockBar>
        </Dock>
        <Canvas>
          <Model viewBox="38 392 2362 1202">
            <CadText $latin x="1160" y="533">zdj</CadText>
            <CadText x="1388" y="514">命令</CadText>
            <CadText x="544" y="662">对矩形的边进行</CadText>
            <CadText $latin x="1128" y="680">45</CadText>
            <CadText x="1338" y="662">度切角</CadText>
            <CadText $latin x="1572" y="680">,</CadText>
            <CadText x="1634" y="662">用于轴端头倒角。</CadText>
            <g fill="#cfcfcf">
              <rect x="1133" y="551" width="420" height="8" />
              <rect x="1133" y="566" width="420" height="1" />
              <rect x="519" y="699" width="1667" height="8" />
              <rect x="519" y="714" width="1667" height="1" />
            </g>
            <g fill="none" stroke="#e2e200">
              <rect x="611.500" y="806.500" width="583" height="173" />
              <rect x="1690.500" y="811.500" width="424" height="218" />
            </g>
            <circle cx="405" cy="838" r="8" fill="none" stroke="#39a0ee" strokeWidth="4" />
          </Model>
          <ViewLabel>[−][俯视][二维线框]</ViewLabel>
          <Console>
            <Log>
              <LogBox $brief $faint $bg="#474d50">错误:函数已取消</LogBox>
              <LogBox $brief $bg="#565656">耗时8秒</LogBox>
              <LogBox $bg="linear-gradient(#5a5a5a 36px, #66686d 38px, #696969 48px)">{LOG_LINES}</LogBox>
            </Log>
            <CommandBar>
              <CommandTools>
                <Drawing viewBox="0 0 8 36" $w={8} $h={36}><path d="M1 0V36M7 0V36" stroke="#999" strokeWidth="2" strokeDasharray="3 3" /></Drawing>
                <button aria-label="关闭"><Drawing viewBox="0 0 20 20" $w={20}><path d="M2 2L18 18M18 2L2 18" stroke="#ddd" strokeWidth="3" /></Drawing></button>
                <button aria-label="自定义"><Drawing viewBox="0 0 32 32" $w={32}><path d="M15 12L29 27" stroke="#b8bfc4" strokeWidth="6" strokeLinecap="round" /><path d="M6 7a7 7 0 1 0 7-4v7H8z" fill="#b8bfc4" /></Drawing></button>
              </CommandTools>
              <PromptButton aria-label="最近使用的命令">
                <Drawing viewBox="0 0 28 28" $w={28}><rect x="1" y="1" width="26" height="26" rx="2" fill="#a3b1bf" stroke="#8c9297" strokeWidth="2" /><path d="M6 7l7 7-7 7M14 21h8" stroke="#444" strokeWidth="3" fill="none" /></Drawing>
                <Drawing viewBox="0 0 12 7" $w={12} $h={7}><path d="M0 0h12L6 7z" fill="#555" /></Drawing>
              </PromptButton>
              <CommandInput aria-label="命令" placeholder="键入命令" />
              <Recent aria-label="历史记录"><Drawing viewBox="0 0 16 8" $w={16} $h={8}><path d="M8 0l8 8H0z" fill="#333" /></Drawing></Recent>
            </CommandBar>
          </Console>
        </Canvas>
      </Work>

      <Footer>
        <ModelTabs>
          <ModelTab $on $w={107}>模型</ModelTab>
          <ModelTab $w={138}>Layout1</ModelTab>
          <AddTab $low>+</AddTab>
        </ModelTabs>
        <Status>
          {STATUS.map((g, i) => (
            <StatusGroup key={i} $w={g.w} $pl={g.pl}>
              {g.items.map((item, k) => <StatusItem key={k} item={item} />)}
            </StatusGroup>
          ))}
        </Status>
      </Footer>

      <Palette aria-label="特性">
        <PaletteBody>
          <PaletteTop>
            <Selector>
              <Pick aria-label="选择对象" defaultValue="无选择"><option>无选择</option></Pick>
              <SelectorArrow><Caret /></SelectorArrow>
            </Selector>
            <PaletteTools>
              <button aria-label="切换 PICKADD"><Drawing viewBox="0 0 32 32" $w={32}><rect x="4" y="7" width="14" height="14" rx="2" fill="#9dc8ee" stroke="#14283c" strokeWidth="2" /><rect x="11" y="13" width="15" height="14" rx="2" fill="#8fc0ec" stroke="#14283c" strokeWidth="2" /><path d="M20 2h5v4h4v5h-4v4h-5v-4h-4V6h4z" fill="#0c1" stroke="#030" /></Drawing></button>
              <button aria-label="选择对象"><Drawing viewBox="0 0 32 32" $w={32}><path d="M16 4V12M16 20V28M4 16H12M20 16H28" stroke="#eee" strokeWidth="2" /><rect x="12" y="12" width="8" height="8" fill="none" stroke="#eee" strokeWidth="2" /></Drawing></button>
              <button aria-label="快速选择"><Drawing viewBox="0 0 32 32" $w={32}><path d="M14 4V12M14 20V28M3 16H10M18 16H22" stroke="#eee" strokeWidth="2" /><rect x="10" y="12" width="8" height="8" fill="none" stroke="#eee" strokeWidth="2" /><path d="M29 2l-8 7h4l-3 7 9-8h-4z" fill="#f5a623" /><path d="M19 19h11v11H19zM19 23h11M19 27h11M23 19v11M27 19v11" fill="none" stroke="#eee" strokeWidth="1.500" /></Drawing></button>
            </PaletteTools>
          </PaletteTop>
          {SECTIONS.map((s) => (
            <Section key={s.title}>
              <SectionHead>{s.title}<Rule $w={12} $h={3} $c="#fff" /></SectionHead>
              <Props>
                <tbody>
                  {s.rows.map(([name, text, opt = {}], i) => (
                    <PropRow key={i}>
                      <PropName scope="row">{name}</PropName>
                      <PropValue $off={opt.off}><Value text={text} mark={opt.mark} /></PropValue>
                    </PropRow>
                  ))}
                </tbody>
              </Props>
            </Section>
          ))}
        </PaletteBody>
        <PaletteSide>
          <SideTools>
            <button aria-label="关闭"><Drawing viewBox="0 0 24 24" $w={24}><path d="M4 5L20 19M20 5L4 19" stroke={G} strokeWidth="5" /></Drawing></button>
            <button aria-label="自动隐藏"><Drawing viewBox="0 0 24 24" $w={24}><path d="M3 2V22" stroke={G} strokeWidth="4" /><path d="M3 5l9 7-9 7z" fill={G} /></Drawing></button>
            <button aria-label="特性设置"><Drawing viewBox="0 0 24 24" $w={24}><circle cx="12" cy="12" r="8" fill="none" stroke={G} strokeWidth="6" strokeDasharray="4 2" /></Drawing></button>
          </SideTools>
          <SideTitle>特性</SideTitle>
          <Drawing viewBox="0 0 26 26" $w={26}><rect x="1" y="1" width="24" height="24" fill="#444" stroke={G} strokeWidth="2" /><rect x="6" y="5" width="10" height="8" fill="none" stroke={G} strokeWidth="2" /><path d="M5 19h20M9 15v8" stroke={G} strokeWidth="2" /></Drawing>
        </PaletteSide>
      </Palette>
    </Shell>
  );
}
